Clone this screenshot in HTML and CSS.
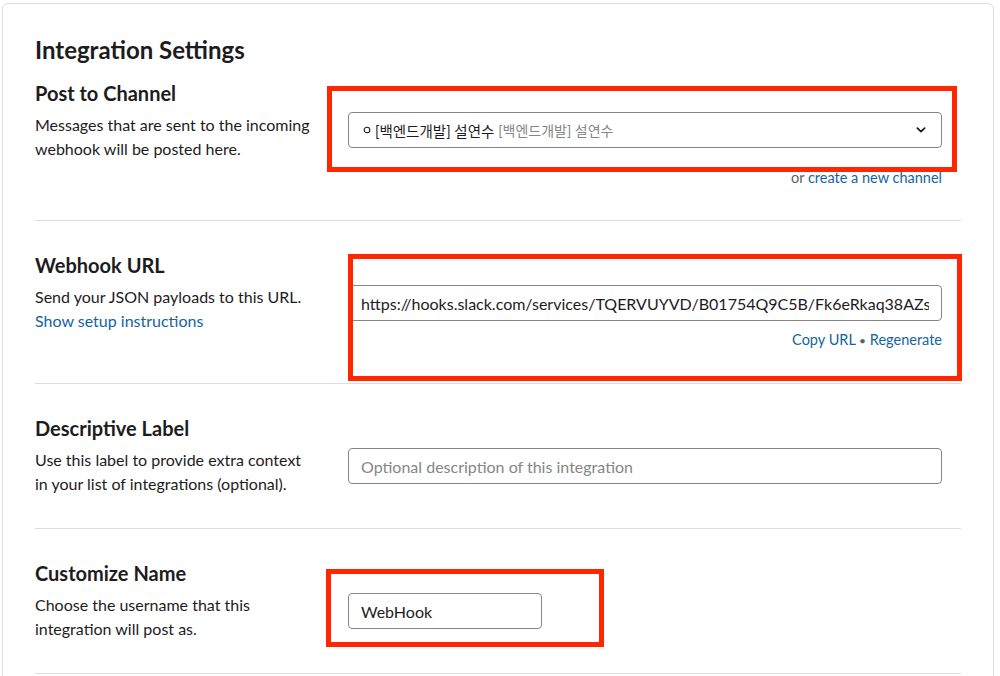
FILE: index.html
```html
<!DOCTYPE html>
<html lang="en">
<head>
<meta charset="utf-8">
<title>Integration Settings</title>
<link rel="stylesheet" href="styles.css">
</head>
<body>
<div class="card">
  <h2 class="title">Integration Settings</h2>

  <section class="row row-first">
    <div class="info">
      <h3 class="heading">Post to Channel</h3>
      <p class="desc">Messages that are sent to the incoming webhook will be posted here.</p>
    </div>
    <div class="control">
      <div class="select">
        <span class="sel-value">
          <svg class="ring" width="8" height="8" viewBox="0 0 8 8"><circle cx="4" cy="4" r="2.8" fill="none" stroke="#1d1c1d" stroke-width="1.1"/></svg>
          <span class="sel-name">[백엔드개발] 설연수</span>
          <span class="sel-sub">[백엔드개발] 설연수</span>
        </span>
        <svg class="chev" width="10" height="6" viewBox="0 0 10 6"><polyline points="1.4,1.2 5,4.6 8.6,1.2" fill="none" stroke="#1d1c1d" stroke-width="1.8" stroke-linecap="round" stroke-linejoin="round"/></svg>
      </div>
      <div class="aux aux-channel">or <a href="#">create a new channel</a></div>
    </div>
  </section>

  <section class="row">
    <div class="info">
      <h3 class="heading">Webhook URL</h3>
      <p class="desc">Send your JSON payloads to this URL.<br><a href="#">Show setup instructions</a></p>
    </div>
    <div class="control">
      <div class="input"><span class="field-text">https://hooks.slack.com/services/TQERVUYVD/B01754Q9C5B/Fk6eRkaq38AZsmVWXqLpD</span></div>
      <div class="aux aux-url"><a href="#">Copy URL</a> <span class="dot">•</span> <a href="#">Regenerate</a></div>
    </div>
  </section>

  <section class="row">
    <div class="info">
      <h3 class="heading">Descriptive Label</h3>
      <p class="desc">Use this label to provide extra context in your list of integrations (optional).</p>
    </div>
    <div class="control">
      <div class="input"><span class="field-text placeholder">Optional description of this integration</span></div>
    </div>
  </section>

  <section class="row">
    <div class="info">
      <h3 class="heading">Customize Name</h3>
      <p class="desc">Choose the username that this integration will post as.</p>
    </div>
    <div class="control">
      <div class="input name"><span class="field-text">WebHook</span></div>
    </div>
  </section>

  <div class="divider"></div>

  <div class="mark mark-1"></div>
  <div class="mark mark-2"></div>
  <div class="mark mark-3"></div>
</div>
</body>
</html>
```

FILE: styles.css
```css
html, body {
  margin: 0;
  padding: 0;
  background: #ffffff;
}

body {
  font-family: Lato, "Noto Sans CJK KR", sans-serif;
  color: #1d1c1d;
  overflow: hidden;
  height: 676px;
}

.card {
  position: relative;
  box-sizing: border-box;
  width: 992px;
  margin: 3px 0 0 2px;
  padding: 31px 32px 80px 32px;
  border: 1px solid #dddddd;
  border-radius: 6px;
  background: #fff;
}

.title {
  margin: 0 0 15px 0;
  font-size: 24px;
  line-height: 30px;
  font-weight: 700;
}

.row {
  display: grid;
  grid-template-columns: 313px 594px;
  padding: 31px 0 32px 0;
  border-top: 1px solid #dddddd;
}

.row-first {
  padding-top: 0;
  border-top: none;
}

.divider {
  border-top: 1px solid #dddddd;
}

.heading {
  margin: 0;
  font-size: 20px;
  line-height: 26px;
  font-weight: 700;
}

.desc {
  margin: 7px 0 0 0;
  width: 279px;
  font-size: 16px;
  line-height: 24px;
}

a {
  color: #1264a3;
  text-decoration: none;
}

.control {
  padding-top: 33px;
  display: flex;
  flex-direction: column;
}

.row-first .control {
  padding-top: 32px;
}

.select,
.input {
  box-sizing: border-box;
  height: 36px;
  border: 1px solid #868686;
  border-radius: 4px;
  display: flex;
  align-items: center;
}

.select {
  justify-content: space-between;
  padding: 0 15px 0 14px;
  font-size: 15px;
}

.sel-value {
  display: flex;
  align-items: center;
  white-space: nowrap;
}

.ring {
  margin-right: 4px;
}

.sel-name {
  font-size: 14.5px;
}

.sel-sub {
  color: #868686;
  margin-left: 4px;
  font-size: 14px;
}

.input {
  padding: 0 12px;
  font-size: 16px;
}

.field-text {
  flex: 1;
  min-width: 0;
  white-space: nowrap;
  overflow: hidden;
}

.placeholder {
  color: #868686;
}

.name {
  width: 194px;
}

.aux {
  align-self: flex-end;
  font-size: 14.5px;
  line-height: 20px;
  color: #616061;
}

.aux-channel {
  margin-top: 20px;
}

.aux-url {
  margin-top: 9px;
}

.dot {
  color: #616061;
  font-size: 12px;
}

.mark {
  position: absolute;
  box-sizing: border-box;
  border: 5px solid #ff2600;
}

.mark-1 {
  left: 324px;
  top: 82px;
  width: 630px;
  height: 86px;
}

.mark-2 {
  left: 345px;
  top: 250px;
  width: 614px;
  height: 127px;
}

.mark-3 {
  left: 323px;
  top: 565px;
  width: 278px;
  height: 78px;
}
```
